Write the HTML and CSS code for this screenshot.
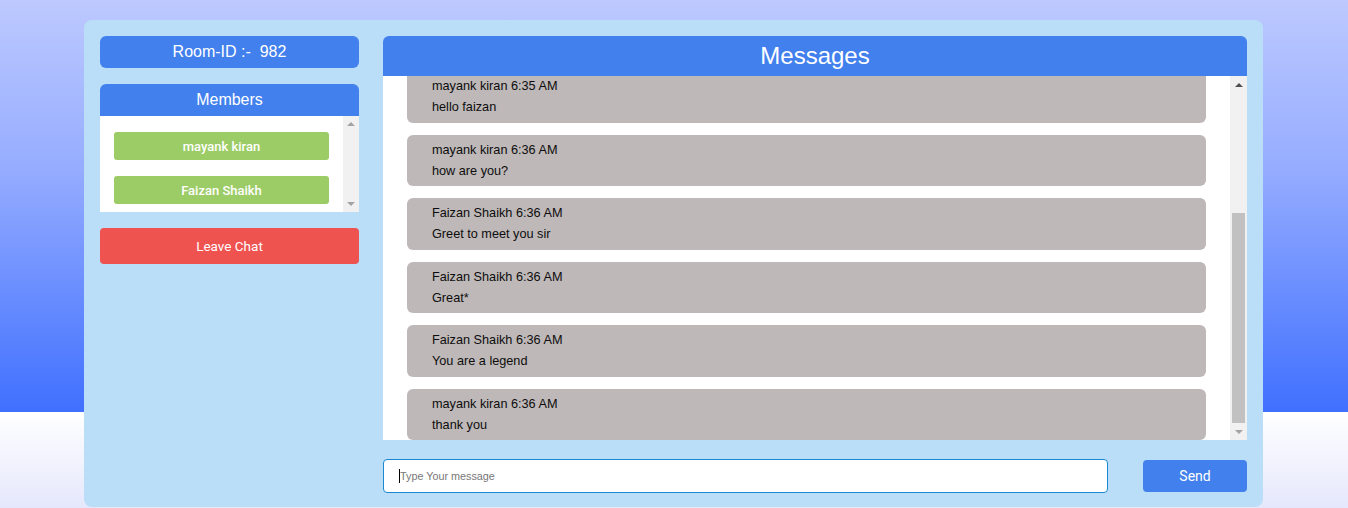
FILE: index.html
```html
<!DOCTYPE html>
<html>
<head>
<meta charset="utf-8">
<link rel="stylesheet" href="styles.css">
</head>
<body>
<div class="app">
  <aside class="side">
    <div class="room">Room-ID :-&nbsp; 982</div>
    <div class="members">
      <div class="members-head">Members</div>
      <div class="members-body">
        <div class="members-list">
          <div class="member">mayank kiran</div>
          <div class="member">Faizan Shaikh</div>
        </div>
        <div class="sbar sbar-sm">
          <div class="sbtn"><span class="arr up off"></span></div>
          <div class="strack"></div>
          <div class="sbtn"><span class="arr down off"></span></div>
        </div>
      </div>
    </div>
    <button class="leave">Leave Chat</button>
  </aside>
  <main class="chat">
    <div class="chat-head">Messages</div>
    <div class="msgs-body">
      <div class="msgs">
        <div class="msgs-inner">
          <div class="msg"><div class="who">Faizan Shaikh 6:34 AM</div><div class="txt">hi</div></div>
          <div class="msg"><div class="who">mayank kiran 6:34 AM</div><div class="txt">hii</div></div>
          <div class="msg"><div class="who">Faizan Shaikh 6:35 AM</div><div class="txt">hello mayank</div></div>
          <div class="msg"><div class="who">mayank kiran 6:35 AM</div><div class="txt">hello faizan</div></div>
          <div class="msg"><div class="who">mayank kiran 6:36 AM</div><div class="txt">how are you?</div></div>
          <div class="msg"><div class="who">Faizan Shaikh 6:36 AM</div><div class="txt">Greet to meet you sir</div></div>
          <div class="msg"><div class="who">Faizan Shaikh 6:36 AM</div><div class="txt">Great*</div></div>
          <div class="msg"><div class="who">Faizan Shaikh 6:36 AM</div><div class="txt">You are a legend</div></div>
          <div class="msg"><div class="who">mayank kiran 6:36 AM</div><div class="txt">thank you</div></div>
        </div>
      </div>
      <div class="sbar">
        <div class="sbtn"><span class="arr up"></span></div>
        <div class="strack"><div class="sthumb"></div></div>
        <div class="sbtn"><span class="arr down off"></span></div>
      </div>
    </div>
    <form class="composer">
      <div class="input-wrap">
        <span class="caret"></span>
        <input class="input" type="text" placeholder="Type Your message">
      </div>
      <button class="send" type="button">Send</button>
    </form>
  </main>
</div>
</body>
</html>
```
FILE: styles.css
```css
* { box-sizing: border-box; }
html, body { margin: 0; height: 100%; overflow: hidden; }
body {
  font-family: "Liberation Sans", Arial, sans-serif;
  background: linear-gradient(to bottom, #bdc9ff 0px, #95acff 170px, #4070ff 412px, #ffffff 412px, #e5e8fc 508px);
  padding: 20px 85px 0 84px;
}
.app {
  width: 1179px;
  height: 487px;
  background: #bbdef8;
  border-radius: 8px;
  padding: 16px 16px 14px;
  display: flex;
  gap: 24px;
}
.side {
  width: 259px;
  flex: none;
  display: flex;
  flex-direction: column;
}
.room {
  height: 32px;
  background: #4180ed;
  color: #fff;
  border-radius: 6px;
  font-size: 16px;
  display: flex;
  align-items: center;
  justify-content: center;
}
.members { margin-top: 16px; }
.members-head {
  height: 32px;
  background: #4180ed;
  color: #fff;
  border-radius: 6px 6px 0 0;
  font-size: 16px;
  display: flex;
  align-items: center;
  justify-content: center;
}
.members-body {
  height: 96px;
  display: flex;
  background: #fff;
}
.members-list {
  flex: 1;
  overflow: hidden;
  padding: 16px 0 0 14px;
  display: flex;
  flex-direction: column;
  gap: 16px;
}
.member {
  width: 215px;
  height: 28px;
  flex: none;
  background: #9ccc65;
  color: #fff;
  border-radius: 3px;
  font-family: Roboto, "Liberation Sans", sans-serif;
  font-weight: 500;
  font-size: 13px;
  display: flex;
  align-items: center;
  justify-content: center;
}
.leave {
  margin-top: 16px;
  height: 36px;
  border: 0;
  background: #ef5350;
  color: #fff;
  border-radius: 4px;
  font-family: Roboto, "Liberation Sans", sans-serif;
  font-size: 13.5px;
  padding: 0;
}
.chat {
  flex: 1;
  min-width: 0;
  display: flex;
  flex-direction: column;
}
.chat-head {
  height: 40px;
  flex: none;
  background: #4180ed;
  color: #fff;
  border-radius: 6px 6px 0 0;
  font-size: 24px;
  display: flex;
  align-items: center;
  justify-content: center;
}
.msgs-body {
  height: 364px;
  flex: none;
  display: flex;
  background: #fff;
}
.msgs {
  flex: 1;
  min-width: 0;
  overflow: hidden;
  display: flex;
  flex-direction: column-reverse;
}
.msgs-inner { padding-left: 24px; padding-right: 24px; }
.msg {
  margin-top: 12px;
  height: 51.5px;
  background: #beb8b8;
  border-radius: 6px;
  padding: 5px 25px 0;
  color: #0d0d0d;
  font-size: 12.7px;
  line-height: 21px;
}

/* scrollbars */
.sbar {
  width: 17px;
  flex: none;
  background: #f1f1f1;
  display: flex;
  flex-direction: column;
}
.sbar-sm { width: 16px; }
.sbtn {
  height: 17px;
  flex: none;
  display: flex;
  align-items: center;
  justify-content: center;
}
.sbar-sm .sbtn { height: 16px; }
.strack {
  flex: 1;
  display: flex;
  flex-direction: column;
  justify-content: flex-end;
  padding: 0 2px;
}
.sthumb {
  height: 210px;
  background: #c1c1c1;
}
.arr {
  width: 0;
  height: 0;
  border-left: 4px solid transparent;
  border-right: 4px solid transparent;
}
.arr.up { border-bottom: 4px solid #505050; }
.arr.down { border-top: 4px solid #505050; }
.arr.up.off { border-bottom-color: #a3a3a3; }
.arr.down.off { border-top-color: #a3a3a3; }

.composer {
  margin: 19px 0 0;
  display: flex;
  align-items: center;
  justify-content: space-between;
}
.input-wrap {
  position: relative;
  width: 725px;
  height: 34px;
}
.caret {
  position: absolute;
  left: 16px;
  top: 10px;
  width: 1px;
  height: 14px;
  background: #000;
}
.input {
  width: 100%;
  height: 34px;
  border: 1px solid #1b88d0;
  border-radius: 4px;
  padding: 0 16px;
  font-family: "Liberation Sans", Arial, sans-serif;
  font-size: 10.8px;
  outline: none;
  background: #fff;
}
.input::placeholder { color: #777; }
.send {
  width: 104px;
  height: 32px;
  border: 0;
  background: #4180ed;
  color: #fff;
  border-radius: 4px;
  font-family: Roboto, "Liberation Sans", sans-serif;
  font-size: 14px;
  padding: 0;
}
```
